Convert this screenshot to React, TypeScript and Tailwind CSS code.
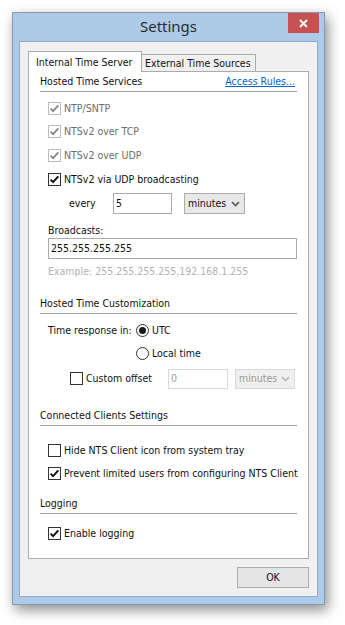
import React from "react";

const Check = ({ checked, disabled }: { checked?: boolean; disabled?: boolean }) => (
  <svg width="13" height="13" viewBox="0 0 13 13" className="shrink-0">
    <rect x="0.5" y="0.5" width="12" height="12" fill="#fff" stroke={disabled ? "#bcbcbc" : "#333"} />
    {checked && (
      <path d="M2.6 6.6 L5.1 9.1 L10.3 3.4" fill="none" stroke={disabled ? "#8a8a8a" : "#111"} strokeWidth="2" />
    )}
  </svg>
);

const Radio = ({ checked }: { checked?: boolean }) => (
  <svg width="13" height="13" viewBox="0 0 13 13" className="shrink-0">
    <circle cx="6.5" cy="6.5" r="6" fill="#fff" stroke="#333" />
    {checked && <circle cx="6.5" cy="6.5" r="3.5" fill="#1a1a1a" />}
  </svg>
);

const Chevron = ({ color }: { color: string }) => (
  <svg width="9" height="6" viewBox="0 0 9 6" className="shrink-0">
    <path d="M1 1 L4.5 4.5 L8 1" fill="none" stroke={color} strokeWidth="1.6" />
  </svg>
);

const Header = ({ title, right }: { title: string; right?: React.ReactNode }) => (
  <div className="flex flex-col">
    <div className="h-[19px] flex items-center justify-between text-[#111]">
      <span>{title}</span>
      {right}
    </div>
    <div className="h-px bg-[#a0a0a0]" />
  </div>
);

const CheckRow = ({
  label,
  checked,
  disabled,
  h,
}: {
  label: string;
  checked?: boolean;
  disabled?: boolean;
  h: string;
}) => (
  <div className={`flex items-center pl-[8px] gap-[3px] ${h}`}>
    <Check checked={checked} disabled={disabled} />
    <span className={disabled ? "text-[#6d6d6d]" : "text-[#111]"}>{label}</span>
  </div>
);

export default function App() {
  return (
    <div
      className="w-[345px] h-[625px] bg-white pt-[12px] pl-[12px] text-[10.5px] leading-none whitespace-nowrap"
      style={{ fontFamily: "'DejaVu Sans Condensed', 'DejaVu Sans', sans-serif" }}
    >
      <div className="w-[313px] h-[593px] border border-[#8799b0] bg-[#aecae9] flex flex-col shadow-[3px_5px_12px_rgba(0,0,0,0.45)]">
        {/* Title bar */}
        <div className="relative h-[28px] flex items-center justify-center">
          <span
            className="text-[15px] text-[#2b2b2b] -mt-[1px]"
            style={{ fontFamily: "'Noto Sans', sans-serif" }}
          >
            Settings
          </span>
          <div className="absolute right-[5px] top-0 w-[31px] h-[20px] bg-[#c75050] flex items-center justify-center">
            <svg width="9" height="9" viewBox="0 0 9 9">
              <path d="M1 1 L8 8 M8 1 L1 8" stroke="#fff" strokeWidth="1.8" />
            </svg>
          </div>
        </div>
        {/* Client area */}
        <div className="mx-[6px] h-[556px] bg-[#f0f0f0] border border-[#94aac6] flex flex-col px-[8px] pt-[9px]">
          {/* Tabs */}
          <div className="flex items-end h-[21px] relative z-10">
            <div className="h-[21px] w-[114px] bg-white border border-[#acacac] border-b-0 flex items-center pl-[7px] text-[#111]">
              Internal Time Server
            </div>
            <div className="h-[18px] w-[114px] bg-[#f0f0f0] border border-[#acacac] border-l-0 flex items-center pl-[3px] text-[#111]">
              External Time Sources
            </div>
          </div>
          {/* Panel */}
          <div className="-mt-px h-[488px] bg-white border border-[#acacac] flex flex-col pl-[11px] pr-[11px]">
            <Header
              title="Hosted Time Services"
              right={<span className="text-[#0066cc] underline mr-[2px]">Access Rules...</span>}
            />
            <div className="h-[4px]" />
            <CheckRow label="NTP/SNTP" checked disabled h="h-[24px]" />
            <CheckRow label="NTSv2 over TCP" checked disabled h="h-[23px]" />
            <CheckRow label="NTSv2 over UDP" checked disabled h="h-[24px]" />
            <CheckRow label="NTSv2 via UDP broadcasting" checked h="h-[24px]" />
            <div className="mt-[2px] h-[21px] flex items-center text-[#111]">
              <span className="ml-[29px] w-[44px]">every</span>
              <div className="h-[21px] w-[59px] border border-[#acacac] bg-white flex items-center pl-[2px]">5</div>
              <div className="ml-[12px] h-[21px] w-[61px] border border-[#acacac] bg-[#e8e8e8] flex items-center justify-between pl-[3px] pr-[4px]">
                <span>minutes</span>
                <Chevron color="#555" />
              </div>
            </div>
            <div className="mt-[8px] h-[16px] flex items-center pl-[8px] text-[#111]">Broadcasts:</div>
            <div className="ml-[8px] h-[21px] border border-[#acacac] bg-white flex items-center pl-[2px] text-[#111]">
              255.255.255.255
            </div>
            <div className="h-[24px] flex items-center pl-[8px] text-[#b3b3b3]">
              Example: 255.255.255.255,192.168.1.255
            </div>
            <div className="mt-[11px]">
              <Header title="Hosted Time Customization" />
            </div>
            <div className="mt-[5px] h-[22px] flex items-center text-[#111]">
              <span className="ml-[8px] w-[88px]">Time response in:</span>
              <Radio checked />
              <span className="ml-[3px]">UTC</span>
            </div>
            <div className="h-[24px] flex items-center text-[#111]">
              <span className="ml-[8px] w-[88px]" />
              <Radio />
              <span className="ml-[3px]">Local time</span>
            </div>
            <div className="mt-[3px] h-[21px] flex items-center text-[#111]">
              <div className="ml-[30px]">
                <Check />
              </div>
              <span className="ml-[3px] w-[82px]">Custom offset</span>
              <div className="h-[20px] w-[60px] border border-[#d9d9d9] bg-white flex items-center pl-[2px] text-[#a0a0a0]">0</div>
              <div className="ml-[7px] h-[20px] w-[60px] border border-[#d9d9d9] bg-[#efefef] flex items-center justify-between pl-[3px] pr-[4px] text-[#9a9a9a]">
                <span>minutes</span>
                <Chevron color="#b8b8b8" />
              </div>
            </div>
            <div className="mt-[17px]">
              <Header title="Connected Clients Settings" />
            </div>
            <div className="h-[12px]" />
            <CheckRow label="Hide NTS Client icon from system tray" h="h-[24px]" />
            <CheckRow label="Prevent limited users from configuring NTS Client" checked h="h-[22px]" />
            <div className="mt-[10px]">
              <Header title="Logging" />
            </div>
            <div className="h-[7px]" />
            <CheckRow label="Enable logging" checked h="h-[24px]" />
          </div>
          {/* Footer */}
          <div className="mt-[8px] flex justify-end">
            <div className="w-[72px] h-[21px] border border-[#acacac] bg-[#e5e5e5] flex items-center justify-center text-[#111]">
              OK
            </div>
          </div>
        </div>
      </div>
    </div>
  );
}
